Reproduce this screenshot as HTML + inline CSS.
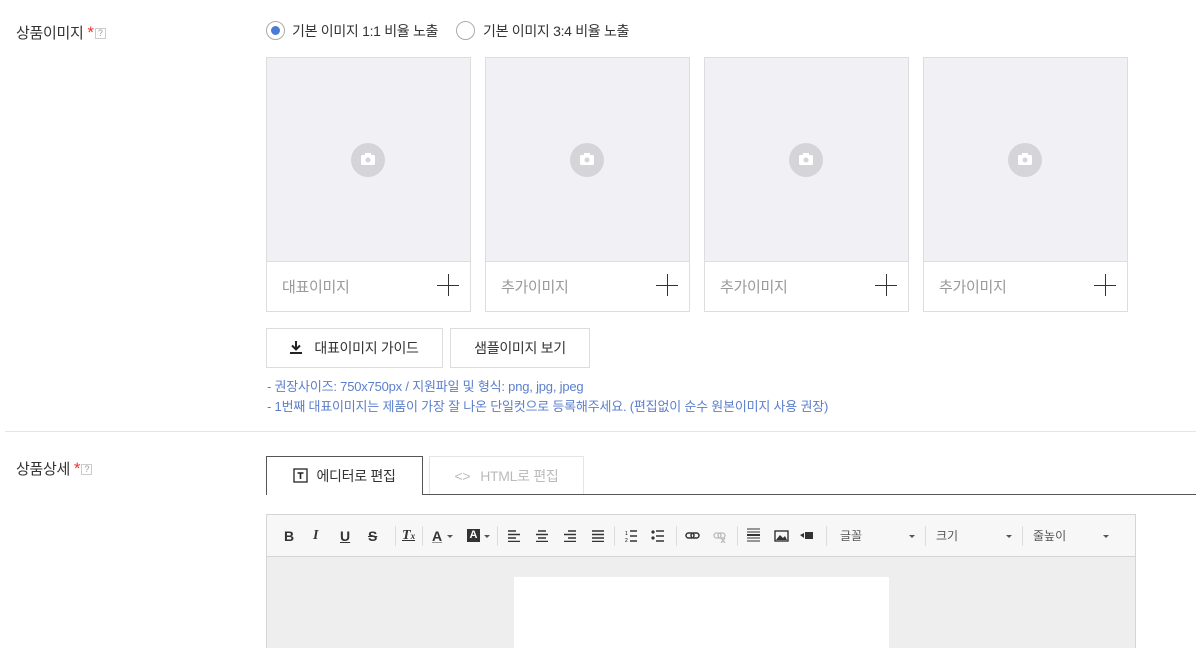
<!DOCTYPE html><html><head><meta charset="utf-8"><style>
*{box-sizing:border-box;margin:0;padding:0}
html,body{width:1196px;height:648px;overflow:hidden}
body{background:#fff;font-family:"Liberation Sans","Noto Sans CJK KR",sans-serif;color:#333;position:relative;font-size:13px}
.a{position:absolute;white-space:nowrap}
.card{position:absolute;top:57px;width:205px;height:255px;border:1px solid #ddd}
.card .img{height:204px;background:#f1f1f5;border-bottom:1px solid #ddd;position:relative}
.card .cam{position:absolute;left:84px;top:85px;width:34px;height:34px;border-radius:50%;background:#d4d4d9}
.card .lbl{position:absolute;left:15px;top:218px;color:#999;font-size:15px;letter-spacing:-.3px}
.card .plus{position:absolute;right:11px;top:216px;width:22px;height:22px}
.btn{position:absolute;border:1px solid #ddd;background:#fff;font-size:14px;color:#333;text-align:center;line-height:38px;height:40px;letter-spacing:-.3px}
.note{position:absolute;left:267px;font-size:13px;color:#5b7fcb;letter-spacing:-.2px}
.tb{position:absolute;top:0;height:42px;line-height:42px;font-size:14px;color:#333;font-weight:bold}
.sep{position:absolute;top:11px;width:1px;height:20px;background:#ddd}
.dd{position:absolute;top:0;line-height:42px;font-size:12px;color:#555}
.ar{position:absolute;top:20px;border-left:3px solid transparent;border-right:3px solid transparent;border-top:3px solid #555}
.q{display:inline-block;width:11px;height:11px;border:1px solid #ccc;font-size:9px;line-height:9px;text-align:center;color:#999;vertical-align:2px;margin-left:1px}
</style></head><body>
<div class="a" style="left:16px;top:22px;font-size:15px;color:#333;letter-spacing:-.3px">상품이미지 <span style="color:#e33;font-size:17px">*</span><span class="q">?</span></div>
<div class="a" style="left:266px;top:21px;width:19px;height:19px;border:1px solid #aaa;border-radius:50%"><div style="margin:4px;width:9px;height:9px;border-radius:50%;background:#4a7bd8"></div></div>
<div class="a" style="left:292px;top:21px;font-size:14px;letter-spacing:-.3px">기본 이미지 1:1 비율 노출</div>
<div class="a" style="left:456px;top:21px;width:19px;height:19px;border:1px solid #aaa;border-radius:50%"></div>
<div class="a" style="left:483px;top:21px;font-size:14px;letter-spacing:-.3px">기본 이미지 3:4 비율 노출</div>

<div class="card" style="left:266px"><div class="img"><div class="cam"><svg width="34" height="34"><rect x="10" y="12" width="14" height="10" rx="1.5" fill="#fff"/><rect x="14" y="10" width="6" height="3" fill="#fff"/><circle cx="17" cy="17" r="2.5" fill="#d4d4d9"/></svg></div></div><div class="lbl">대표이미지</div><svg class="plus"><path d="M11.5 0V22M0 11.5H22" stroke="#333" stroke-width="1"/></svg></div>
<div class="card" style="left:485px"><div class="img"><div class="cam"><svg width="34" height="34"><rect x="10" y="12" width="14" height="10" rx="1.5" fill="#fff"/><rect x="14" y="10" width="6" height="3" fill="#fff"/><circle cx="17" cy="17" r="2.5" fill="#d4d4d9"/></svg></div></div><div class="lbl">추가이미지</div><svg class="plus"><path d="M11.5 0V22M0 11.5H22" stroke="#333" stroke-width="1"/></svg></div>
<div class="card" style="left:704px"><div class="img"><div class="cam"><svg width="34" height="34"><rect x="10" y="12" width="14" height="10" rx="1.5" fill="#fff"/><rect x="14" y="10" width="6" height="3" fill="#fff"/><circle cx="17" cy="17" r="2.5" fill="#d4d4d9"/></svg></div></div><div class="lbl">추가이미지</div><svg class="plus"><path d="M11.5 0V22M0 11.5H22" stroke="#333" stroke-width="1"/></svg></div>
<div class="card" style="left:923px"><div class="img"><div class="cam"><svg width="34" height="34"><rect x="10" y="12" width="14" height="10" rx="1.5" fill="#fff"/><rect x="14" y="10" width="6" height="3" fill="#fff"/><circle cx="17" cy="17" r="2.5" fill="#d4d4d9"/></svg></div></div><div class="lbl">추가이미지</div><svg class="plus"><path d="M11.5 0V22M0 11.5H22" stroke="#333" stroke-width="1"/></svg></div>

<div class="btn" style="left:266px;top:328px;width:177px"><svg width="12" height="13" style="vertical-align:-1px;margin-right:12px"><path d="M6 0V8M2 4.5L6 8.5L10 4.5" stroke="#222" stroke-width="2" fill="none"/><rect x="0" y="11" width="12" height="2" fill="#222"/></svg>대표이미지 가이드</div>
<div class="btn" style="left:450px;top:328px;width:140px">샘플이미지 보기</div>
<div class="note" style="top:376px">- 권장사이즈: 750x750px / 지원파일 및 형식: png, jpg, jpeg</div>
<div class="note" style="top:396px">- 1번째 대표이미지는 제품이 가장 잘 나온 단일컷으로 등록해주세요. (편집없이 순수 원본이미지 사용 권장)</div>
<div class="a" style="left:5px;top:431px;width:1191px;height:1px;background:#e5e5e5"></div>

<div class="a" style="left:16px;top:458px;font-size:15px;letter-spacing:-.3px">상품상세 <span style="color:#e33;font-size:17px">*</span><span class="q">?</span></div>
<div class="a" style="left:266px;top:494px;width:930px;height:1px;background:#555"></div>
<div class="a" style="left:266px;top:456px;width:157px;height:39px;border:1px solid #555;border-bottom:none;background:#fff;text-align:center;line-height:38px;font-size:14px;letter-spacing:-.3px"><svg width="15" height="15" style="vertical-align:-2px;margin-right:8px"><rect x="1" y="1" width="13" height="13" fill="none" stroke="#222" stroke-width="1.3"/><path d="M4.5 5H10.5M7.5 5V11" stroke="#222" stroke-width="1.6"/></svg>에디터로 편집</div>
<div class="a" style="left:429px;top:456px;width:155px;height:38px;border:1px solid #e5e5e5;border-bottom:none;text-align:center;line-height:38px;font-size:14px;color:#bbb;letter-spacing:-.3px"><span style="margin-right:10px">&lt;&gt;</span>HTML로 편집</div>

<div class="a" style="left:266px;top:514px;width:870px;height:134px;border:1px solid #d5d5d5;border-bottom:none;background:#eee;overflow:hidden">
<div style="position:absolute;left:0;top:0;width:868px;height:42px;background:#f7f7f7;border-bottom:1px solid #d5d5d5"></div>
<div class="tb" style="left:17px">B</div><div class="tb" style="left:46px;font-style:italic;font-family:'Liberation Serif',serif">I</div><div class="tb" style="left:73px;text-decoration:underline">U</div><div class="tb" style="left:101px;text-decoration:line-through">S</div>
<div class="sep" style="left:128px"></div>
<div class="tb" style="left:135px;font-style:italic;font-family:'Liberation Serif',serif;text-decoration:underline">T<span style="font-size:9px">x</span></div>
<div class="sep" style="left:155px"></div>
<div class="tb" style="left:165px;text-decoration:underline #999">A</div><div class="ar" style="left:180px"></div>
<div style="position:absolute;left:200px;top:14px;width:13px;height:13px;background:#333;color:#fff;font-size:11px;line-height:13px;text-align:center;font-weight:bold">A</div><div class="ar" style="left:217px"></div>
<div class="sep" style="left:230px"></div>
<svg style="position:absolute;left:241px;top:15px" width="100" height="12"><g stroke="#333" stroke-width="1.6"><path d="M0 1H8M0 4.5H12M0 8H8M0 11.5H12"/><path d="M30 1H38M28 4.5H40M30 8H38M28 11.5H40"/><path d="M60 1H68M56 4.5H68M60 8H68M56 11.5H68"/><path d="M84 1H96M84 4.5H96M84 8H96M84 11.5H96"/></g></svg>
<div class="sep" style="left:347px"></div>
<svg style="position:absolute;left:358px;top:14px" width="40" height="14"><g stroke="#333" stroke-width="1.4"><path d="M5 2H12M5 7H12M5 12H12M31 2H39M31 7H39M31 12H39"/></g><circle cx="28" cy="3" r="1.6" fill="#333"/><circle cx="28" cy="9" r="1.6" fill="#333"/><text x="0" y="6" font-size="5">1</text><text x="0" y="13" font-size="5">2</text></svg>
<div class="sep" style="left:409px"></div>
<svg style="position:absolute;left:418px;top:16px" width="50" height="12"><g fill="none" stroke="#333" stroke-width="1.5"><rect x="1" y="2" width="8" height="5" rx="2.5"/><rect x="6" y="2" width="8" height="5" rx="2.5"/></g><g fill="none" stroke="#bbb" stroke-width="1.3"><rect x="29" y="2" width="7" height="5" rx="2.5"/><rect x="33" y="2" width="7" height="5" rx="2.5"/><path d="M36 7L40 12M40 7L36 12"/></g></svg>
<div class="sep" style="left:470px"></div>
<svg style="position:absolute;left:480px;top:13px" width="70" height="16"><g stroke="#333"><path d="M0 1H13M0 4H13M0 10H13M0 13H13" stroke-width="1"/><path d="M0 7H13" stroke-width="2"/></g><rect x="28" y="3" width="13" height="10" fill="none" stroke="#333" stroke-width="1.4"/><path d="M29 12L33 7L36 10L38 8L40 12Z" fill="#333"/><rect x="58" y="4" width="8" height="7" fill="#333"/><path d="M53 7L57 5V10Z" fill="#333"/></svg>
<div class="sep" style="left:559px"></div>
<div class="dd" style="left:573px">글꼴</div><div class="ar" style="left:642px"></div>
<div class="sep" style="left:658px"></div>
<div class="dd" style="left:669px">크기</div><div class="ar" style="left:739px"></div>
<div class="sep" style="left:755px"></div>
<div class="dd" style="left:766px">줄높이</div><div class="ar" style="left:836px"></div>
<div style="position:absolute;left:247px;top:62px;width:375px;height:72px;background:#fff"></div>
</div>
</body></html>
